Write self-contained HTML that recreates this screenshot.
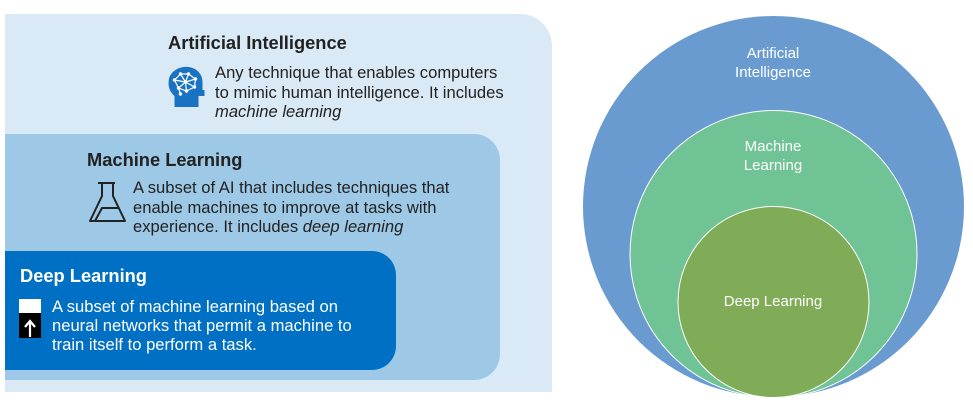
<!DOCTYPE html>
<html><head><meta charset="utf-8"><style>
body{margin:0;width:973px;height:406px;background:#fff;position:relative;overflow:hidden;font-family:"Liberation Sans",sans-serif}
.b{position:absolute}
.t{position:absolute;font-weight:bold;font-size:18.3px;color:#222}
.p{position:absolute;font-size:16.6px;line-height:19.5px;color:#222;white-space:nowrap}
</style></head><body>
<div class="b" style="left:5px;top:14px;width:547px;height:378px;background:#d9e9f5;border-top-right-radius:32px"></div>
<div class="b" style="left:5px;top:134px;width:495px;height:246px;background:#9dc8e6;border-top-right-radius:26px;border-bottom-right-radius:26px"></div>
<div class="b" style="left:5px;top:251px;width:391px;height:119px;background:#0070c5;border-top-right-radius:24px;border-bottom-right-radius:24px"></div>

<div class="t" style="left:168px;top:32px">Artificial Intelligence</div>
<svg class="b" style="left:168px;top:66px" width="37" height="42" viewBox="0 0 36 42">
<path d="M6 41V30C0 25-1 18 1 11 4 4 12 0 20 1 28 2 34 8 34 16V24H36V30H30V41Z" fill="#1a72c2"/>
<g stroke="#fff" stroke-width="1.2" fill="none"><path d="M6 14 12 8 20 8 27 13 26 21 18 25 10 22Z M12 8 17 16 20 8 M6 14 17 16 27 13 M10 22 17 16 26 21 M17 16 18 25 M10 22 12 28"/></g>
<g fill="#fff"><circle cx="6" cy="14" r="1.7"/><circle cx="12" cy="8" r="1.7"/><circle cx="20" cy="8" r="1.7"/><circle cx="27" cy="13" r="1.7"/><circle cx="26" cy="21" r="1.7"/><circle cx="18" cy="25" r="1.7"/><circle cx="10" cy="22" r="1.7"/><circle cx="17" cy="16" r="1.7"/><circle cx="12" cy="28" r="1.7"/></g>
</svg>
<div class="p" style="left:215px;top:63px">Any technique that enables computers<br>to mimic human intelligence. It includes<br><i>machine learning</i></div>

<div class="t" style="left:87px;top:149px">Machine Learning</div>
<svg class="b" style="left:86px;top:181px" width="42" height="43" viewBox="0 0 40 43">
<g stroke="#222" stroke-width="2" fill="none" stroke-linejoin="round"><path d="M11 2H28M15 2V15L3 40H38L26 15V2"/><path d="M8 40 15 27H32"/></g>
</svg>
<div class="p" style="left:133px;top:178px">A subset of AI that includes techniques that<br>enable machines to improve at tasks with<br>experience. It includes <i>deep learning</i></div>

<div class="t" style="left:20px;top:265px;color:#fff">Deep Learning</div>
<div class="b" style="left:19px;top:299px;width:22px;height:14px;background:#fff"></div>
<div class="b" style="left:19px;top:313px;width:22px;height:25px;background:#000"></div>
<svg class="b" style="left:24px;top:318px" width="12" height="20" viewBox="0 0 12 20"><path d="M6 19V4M1 9 6 3 11 9" stroke="#fff" stroke-width="2.2" fill="none"/></svg>
<div class="p" style="left:52px;top:297px;color:#fff;line-height:19px">A subset of machine learning based on<br>neural networks that permit a machine to<br>train itself to perform a task.</div>

<svg class="b" style="left:0;top:0" width="973" height="406">
<circle cx="773.5" cy="206.5" r="190.5" fill="#6a9bd0"/>
<circle cx="773.5" cy="254" r="143.5" fill="#70c395" stroke="#fff" stroke-width="1"/>
<circle cx="773.5" cy="302" r="95.5" fill="#80ab57" stroke="#fff" stroke-width="1"/>
<g fill="#fff" font-family="Liberation Sans,sans-serif" font-size="15" text-anchor="middle">
<text x="773" y="58">Artificial</text><text x="773" y="77">Intelligence</text>
<text x="773" y="151">Machine</text><text x="773" y="170">Learning</text>
<text x="773" y="306">Deep Learning</text></g>
</svg>
</body></html>
